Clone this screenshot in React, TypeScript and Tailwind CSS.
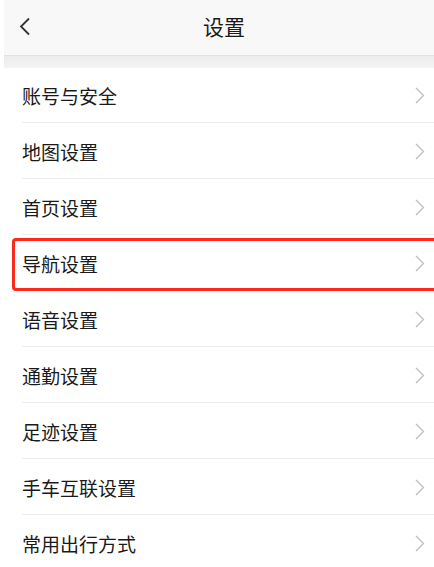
import React from 'react';

const items = ['账号与安全', '地图设置', '首页设置', '导航设置', '语音设置', '通勤设置', '足迹设置', '手车互联设置', '常用出行方式'];

function Chevron() {
  return (
    <svg width="10" height="17" viewBox="0 0 10 17" fill="none" className="shrink-0">
      <path d="M1 1l7.5 7.5L1 16" stroke="#bdbdbd" strokeWidth="1.3" />
    </svg>
  );
}

export default function App() {
  return (
    <div className="w-[434px] h-[567px] overflow-hidden bg-white" style={{ fontFamily: '"Noto Sans CJK SC", "Noto Sans", sans-serif' }}>
      <div className="pl-1">
        <header className="relative h-[56px] bg-[#f8f8f8] border-b border-[#e2e2e2] flex items-center justify-center pl-[10px] pb-[3px]">
          <svg width="12" height="19" viewBox="0 0 12 19" fill="none" className="absolute left-[15px] top-[17px]">
            <path d="M10 1.5L2 9.5l8 8" stroke="#333" strokeWidth="1.8" />
          </svg>
          <span className="text-[21px] text-[#1a1a1a] leading-none">设置</span>
        </header>
        <div className="h-[12px] bg-gradient-to-b from-[#ececec] to-[#f4f4f4]" />
      </div>
      <ul>
        {items.map((label, i) => (
          <li
            key={label}
            className={`relative flex items-center justify-between pl-[22px] pr-[9px] ${i === 0 ? 'h-[55px]' : 'h-[56px]'}`}
          >
            <span className="text-[19px] text-[#1a1a1a] leading-none">{label}</span>
            <Chevron />
            <div className="absolute left-[22px] right-0 bottom-0 h-px bg-[#ededed]" />
            {label === '导航设置' && (
              <div className="absolute left-[12px] right-[-10px] top-[3px] bottom-0 border-[3px] border-[#fb2a1c] rounded-[4px]" />
            )}
          </li>
        ))}
      </ul>
    </div>
  );
}
